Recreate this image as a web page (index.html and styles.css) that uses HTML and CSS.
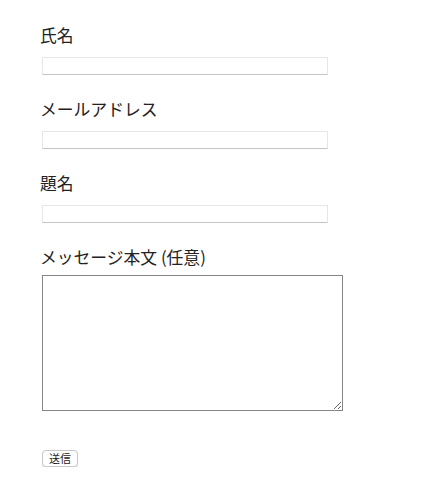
FILE: index.html
```html
<!DOCTYPE html>
<html lang="ja">
<head>
<meta charset="utf-8">
<link rel="stylesheet" href="styles.css">
</head>
<body>
<form class="form">
  <div class="field">
    <label class="label">氏名</label>
    <input class="text" type="text">
  </div>
  <div class="field">
    <label class="label">メールアドレス</label>
    <input class="text" type="email">
  </div>
  <div class="field">
    <label class="label">題名</label>
    <input class="text" type="text">
  </div>
  <div class="field field-area">
    <label class="label">メッセージ本文 (任意)</label>
    <textarea class="area"></textarea>
  </div>
  <div class="actions">
    <button class="submit" type="button">送信</button>
  </div>
</form>
</body>
</html>
```

FILE: styles.css
```css
html, body {
  margin: 0;
  padding: 0;
  background: #fff;
}
body {
  font-family: "Noto Sans CJK JP", "Noto Sans", sans-serif;
  color: #222;
}
.form {
  display: flex;
  flex-direction: column;
  padding: 25px 0 0 40px;
}
.field {
  display: flex;
  flex-direction: column;
  align-items: flex-start;
  margin-bottom: 24px;
}
.label {
  font-size: 16.8px;
  line-height: 20px;
  height: 20px;
}
.text {
  box-sizing: border-box;
  margin: 12px 0 0 2px;
  width: 286px;
  height: 18px;
  padding: 0 3px;
  border: 1px solid #e6e6e6;
  border-bottom-color: #c4c4c4;
  border-radius: 1px;
  background: #fff;
  font-size: 12px;
  outline: none;
}
.field-area {
  margin-bottom: 0;
}
.area {
  box-sizing: border-box;
  margin: 8px 0 0 2px;
  width: 301px;
  height: 136px;
  padding: 2px;
  border: 1px solid #858585;
  background: #fff;
  font-size: 13px;
}
.actions {
  display: flex;
  padding: 39px 0 0 2px;
}
.submit {
  box-sizing: border-box;
  width: 36px;
  height: 17px;
  padding: 0;
  border: 1px solid #c8c8c8;
  border-radius: 4px;
  background: #fff;
  box-shadow: 0 1px 1px rgba(0, 0, 0, 0.12);
  font-family: "Noto Sans CJK JP", sans-serif;
  font-size: 11px;
  line-height: 15px;
  color: #222;
}
```
